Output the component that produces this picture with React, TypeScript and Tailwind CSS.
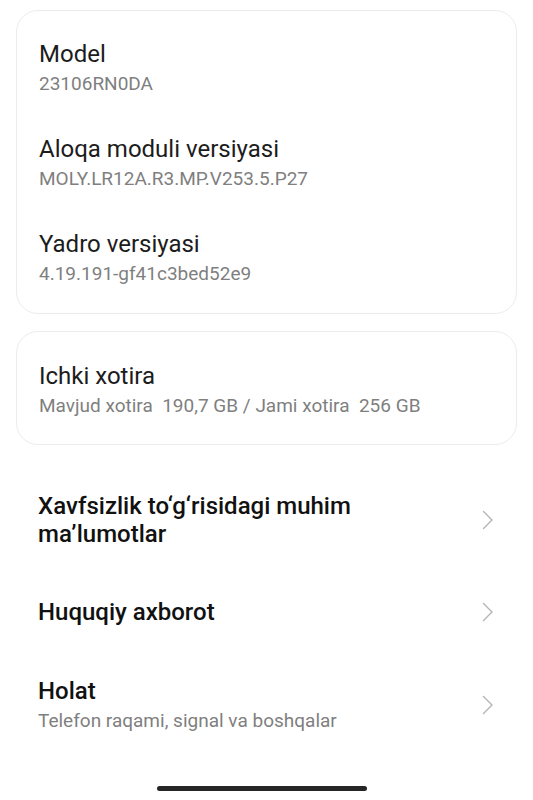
type Info = { title: string; value: string };

const DEVICE_INFO: Info[] = [
  { title: "Model", value: "23106RN0DA" },
  { title: "Aloqa moduli versiyasi", value: "MOLY.LR12A.R3.MP.V253.5.P27" },
  { title: "Yadro versiyasi", value: "4.19.191-gf41c3bed52e9" },
];

function Chevron() {
  return (
    <svg width="12" height="20" viewBox="0 0 12 20" fill="none" aria-hidden>
      <path d="M1.5 1.5 L10 10 L1.5 18.5" stroke="#b4b4b4" strokeWidth="1.4" strokeLinecap="round" strokeLinejoin="round" />
    </svg>
  );
}

function InfoRow({ title, value }: Info) {
  return (
    <div className="flex flex-col">
      <span className="text-[24px] leading-[28px] text-[#1c1c1c]">{title}</span>
      <span className="mt-[4px] whitespace-pre text-[19px] leading-[24px] text-[#7f7f7f]">{value}</span>
    </div>
  );
}

function LinkRow({ lines, sub }: { lines: string[]; sub?: string }) {
  return (
    <div className="flex items-center justify-between pl-[38px] pr-[39px]">
      <div className="flex flex-col">
        {lines.map((l) => (
          <span key={l} className="text-[24px] font-medium leading-[28px] text-[#111]">
            {l}
          </span>
        ))}
        {sub ? (
          <span className="mt-[4px] text-[19px] leading-[24px] text-[#7f7f7f]">{sub}</span>
        ) : null}
      </div>
      <Chevron />
    </div>
  );
}

export default function App() {
  return (
    <div className="relative h-[800px] w-[533px] overflow-hidden bg-white font-['Roboto',sans-serif]">
      <div className="flex flex-col gap-[17px] px-[16px] pt-[10px]">
        <div className="flex flex-col gap-[39px] rounded-[22px] border border-[#ececec] pb-[27px] pl-[22px] pt-[29px]">
          {DEVICE_INFO.map((i) => (
            <InfoRow key={i.title} {...i} />
          ))}
        </div>
        <div className="flex flex-col rounded-[22px] border border-[#ececec] pb-[26px] pl-[22px] pt-[30px]">
          <InfoRow title="Ichki xotira" value="Mavjud xotira  190,7 GB / Jami xotira  256 GB" />
        </div>
      </div>

      <div className="mt-[47px] flex flex-col">
        <LinkRow lines={["Xavfsizlik to‘g‘risidagi muhim", "ma’lumotlar"]} />
        <div className="mt-[50px]">
          <LinkRow lines={["Huquqiy axborot"]} />
        </div>
        <div className="mt-[51px]">
          <LinkRow lines={["Holat"]} sub="Telefon raqami, signal va boshqalar" />
        </div>
      </div>

      <div className="absolute bottom-[9px] left-[157px] h-[5px] w-[210px] rounded-full bg-[#262626]" />
    </div>
  );
}
